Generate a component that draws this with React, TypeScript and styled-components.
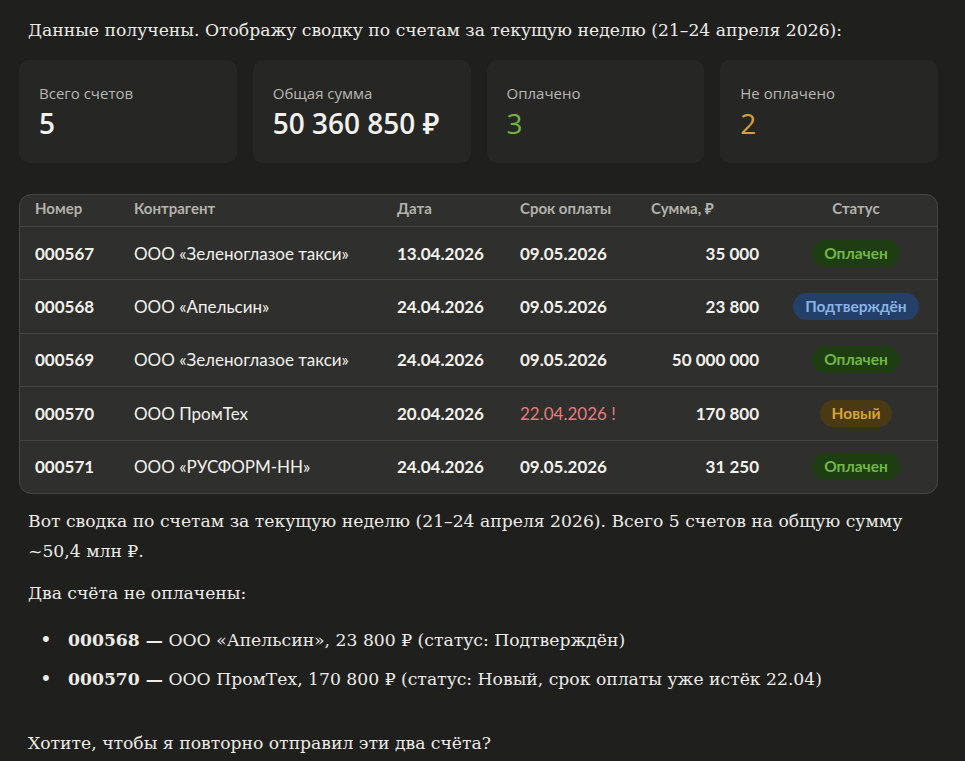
import styled, { createGlobalStyle } from 'styled-components'

type Status = 'paid' | 'confirmed' | 'new'

type Invoice = {
	number: string
	contractor: string
	date: string
	due: string
	overdue?: boolean
	sum: string
	status: Status
}

const invoices: Invoice[] = [
	{ number: '000567', contractor: 'ООО «Зеленоглазое такси»', date: '13.04.2026', due: '09.05.2026', sum: '35 000', status: 'paid' },
	{ number: '000568', contractor: 'ООО «Апельсин»', date: '24.04.2026', due: '09.05.2026', sum: '23 800', status: 'confirmed' },
	{ number: '000569', contractor: 'ООО «Зеленоглазое такси»', date: '24.04.2026', due: '09.05.2026', sum: '50 000 000', status: 'paid' },
	{ number: '000570', contractor: 'ООО ПромТех', date: '20.04.2026', due: '22.04.2026 !', overdue: true, sum: '170 800', status: 'new' },
	{ number: '000571', contractor: 'ООО «РУСФОРМ-НН»', date: '24.04.2026', due: '09.05.2026', sum: '31 250', status: 'paid' },
]

const statusLabel: Record<Status, string> = {
	paid: 'Оплачен',
	confirmed: 'Подтверждён',
	new: 'Новый',
}

// summary cards on top
const stats = [
	{ label: 'Всего счетов', value: '5', tone: 'plain' },
	{ label: 'Общая сумма', value: '50 360 850 ₽', tone: 'plain' },
	{ label: 'Оплачено', value: '3', tone: 'good' },
	{ label: 'Не оплачено', value: '2', tone: 'warn' },
] as const

export default function App(): JSX.Element {
	return (
		<>
			<GlobalStyle />
			<Page>
				<Text>Данные получены. Отображу сводку по счетам за текущую неделю (21–24 апреля 2026):</Text>

				<Cards>
					{stats.map((s) => (
						<Card key={s.label}>
							<CardLabel>{s.label}</CardLabel>
							<CardValue $tone={s.tone}>{s.value}</CardValue>
						</Card>
					))}
				</Cards>

				<Table>
					<HeadRow>
						<span>Номер</span>
						<span>Контрагент</span>
						<span>Дата</span>
						<span>Срок оплаты</span>
						<span>Сумма, ₽</span>
						<HeadCenter>Статус</HeadCenter>
					</HeadRow>
					{invoices.map((inv) => (
						<Row key={inv.number}>
							<Strong>{inv.number}</Strong>
							<Plain>{inv.contractor}</Plain>
							<Strong>{inv.date}</Strong>
							<Due $overdue={!!inv.overdue}>{inv.due}</Due>
							<Amount>{inv.sum}</Amount>
							<StatusCell>
								<Badge $status={inv.status}>{statusLabel[inv.status]}</Badge>
							</StatusCell>
						</Row>
					))}
				</Table>

				<Summary>
					<p>Вот сводка по счетам за текущую неделю (21–24 апреля 2026). Всего 5 счетов на общую сумму ~50,4 млн ₽.</p>
					<p>Два счёта не оплачены:</p>
					<List>
						<li><span><b>000568 —</b> ООО «Апельсин», 23 800 ₽ (статус: Подтверждён)</span></li>
						<li><span><b>000570 —</b> ООО ПромТех, 170 800 ₽ (статус: Новый, срок оплаты уже истёк 22.04)</span></li>
					</List>
					<p>Хотите, чтобы я повторно отправил эти два счёта?</p>
				</Summary>
			</Page>
		</>
	)
}

const GlobalStyle = createGlobalStyle`
	html, body {
		margin: 0;
		background: #1f1f1e;
	}
	body {
		font-family: "DejaVu Serif", "Liberation Serif", serif;
		color: #ecebe6;
	}
`
const Page = styled.main`
	width: 919px;
	padding: 15px 19px 0;
`
const Text = styled.p`
	margin: 0 0 15px;
	padding-left: 9px;
	font-size: 17.2px;
	line-height: 30px;
`
const Cards = styled.div`
	display: grid;
	grid-template-columns: repeat(4, 1fr);
	gap: 16px;
`
const Card = styled.div`
	background: #262625;
	border-radius: 10px;
	padding: 22px 20px 22px;
	font-family: "Open Sans", "Noto Sans", sans-serif;
`
const CardLabel = styled.div`
	font-size: 15px;
	line-height: 22px;
	color: #b8b7b1;
`
const CardValue = styled.div<{ $tone: 'plain' | 'good' | 'warn' }>`
	margin-top: 1px;
	font-size: 28px;
	line-height: 36px;
	font-weight: ${(p) => (p.$tone === 'plain' ? 600 : 400)};
	color: ${(p) => (p.$tone === 'good' ? '#6fb43e' : p.$tone === 'warn' ? '#d5a13c' : '#f2f1ec')};
`
const Table = styled.div`
	margin-top: 31px;
	background: #2f2f2e;
	border: 1px solid #454543;
	border-radius: 12px;
	overflow: hidden;
	font-family: Lato, "Open Sans", sans-serif;
`
const Grid = styled.div`
	display: grid;
	grid-template-columns: 99px 263px 123px 131px 139px 1fr;
	align-items: center;
	& > * {
		padding-left: 15px;
	}
`
const HeadRow = styled(Grid)`
	height: 31px;
	box-sizing: border-box;
	padding-bottom: 6px;
	font-size: 15px;
	font-weight: 700;
	color: #b3b2ac;
`
const HeadCenter = styled.span`
	text-align: center;
	padding-left: 0;
`
const Row = styled(Grid)`
	height: 53.4px;
	border-top: 1px solid #454543;
	box-sizing: border-box;
	font-size: 17px;
	color: #f2f1ec;
`
const Strong = styled.span`
	font-weight: 700;
`
const Plain = styled.span`
	font-weight: 400;
`
const Due = styled.span<{ $overdue: boolean }>`
	font-weight: ${(p) => (p.$overdue ? 400 : 700)};
	color: ${(p) => (p.$overdue ? '#e77b7b' : '#f2f1ec')};
`
const Amount = styled.span`
	font-weight: 700;
	text-align: right;
	padding-right: 16px;
`
const StatusCell = styled.div`
	display: flex;
	justify-content: center;
	padding-left: 0;
`
const badgeColors: Record<Status, [string, string]> = {
	paid: ['#1e3d13', '#71b843'],
	confirmed: ['#244068', '#88b3e6'],
	new: ['#4a3a13', '#d9a33c'],
}
const Badge = styled.span<{ $status: Status }>`
	padding: 0 12px;
	height: 27px;
	line-height: 27px;
	border-radius: 14px;
	font-size: 15.5px;
	font-weight: 700;
	background: ${(p) => badgeColors[p.$status][0]};
	color: ${(p) => badgeColors[p.$status][1]};
`
const Summary = styled.div`
	padding: 12px 0 0 9px;
	font-size: 17.2px;
	line-height: 30px;
	& p {
		margin: 0 0 12px;
	}
`
const List = styled.ul`
	margin: 17px 0 34px;
	padding-left: 12px;
	list-style: none;
	& li {
		display: flex;
		margin-bottom: 9px;
	}
	& li::before {
		content: '•';
		flex: 0 0 28px;
		font-size: 20px;
	}
`
